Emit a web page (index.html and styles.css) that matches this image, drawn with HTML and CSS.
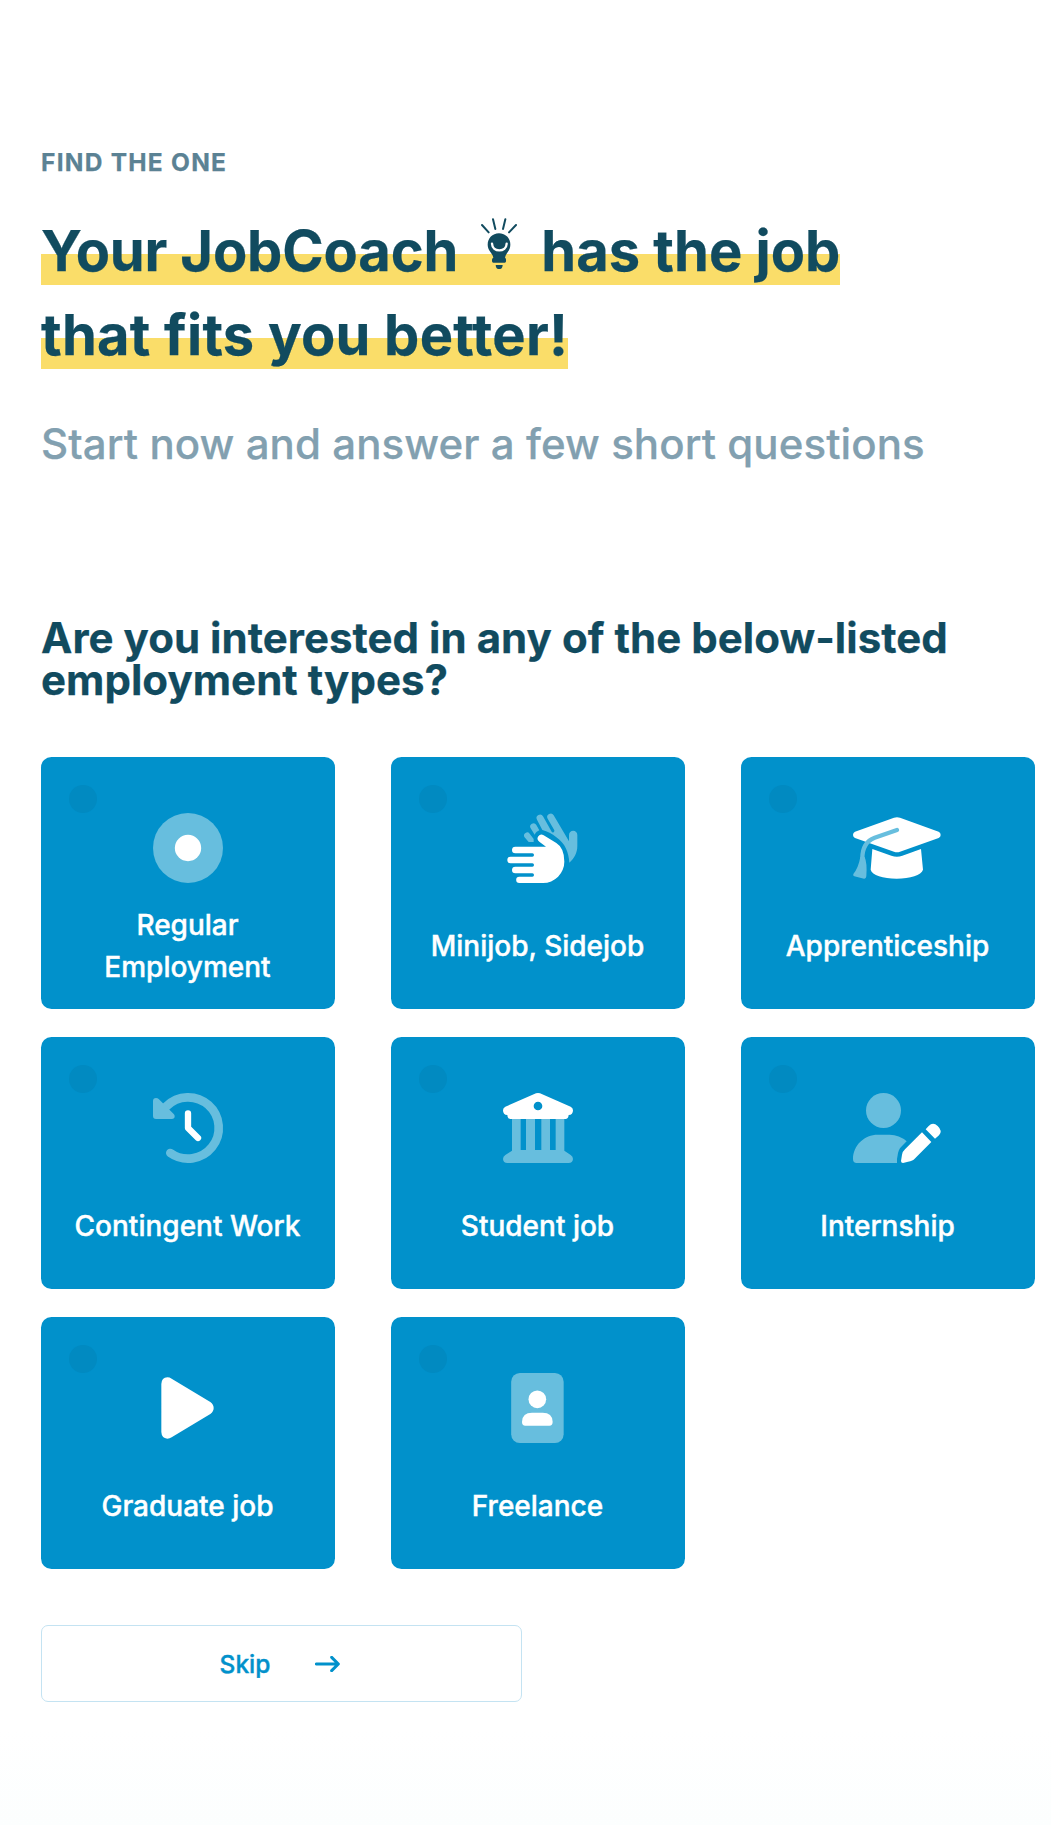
FILE: index.html
```html
<!DOCTYPE html>
<html lang="en">
<head>
<meta charset="utf-8">
<title>JobCoach</title>
<link rel="stylesheet" href="styles.css">
</head>
<body>
<main class="page">
  <header class="intro">
    <p class="eyebrow">Find the one</p>
    <h1 class="headline"><span class="mark"><span class="brand">Your JobCoach</span> <svg class="bulb" viewBox="0 0 110 153" aria-hidden="true"><path class="rays" d="M3 21 23 43M36 4 43 33M73 4 66 33M105 21 84 43"/><path d="M54 46C74 46 88 61 88 80C88 98 74 106 72 119Q75 121 75 125V130Q75 134 71 134H37Q33 134 33 130V125Q33 121 37 119C35 106 20 98 20 80C20 61 34 46 54 46Z"/><path d="M44 141H65Q64 153 57 153H52Q45 153 44 141Z"/><path class="smile" d="M33 77C34 104 76 104 77 77"/></svg> has the job<br><span class="second">that fits you better!</span></span></h1>
    <p class="lead">Start now and answer a few short questions</p>
  </header>

  <section class="step">
    <h2 class="question">Are you interested in any of the below-listed employment types?</h2>
    <div class="options">
      <button class="option">
        <span class="check"></span>
        <svg class="icon" viewBox="0 0 210 210"><circle class="soft" cx="105" cy="105" r="105"/><circle cx="105" cy="105" r="39.5"/></svg>
        <span class="label">Regular Employment</span>
      </button>
      <button class="option">
        <span class="check"></span>
        <svg class="icon" viewBox="0 0 210 210"><path class="soft" d="M118 51 102 20A10 10 0 0 1 120 10L146 56A4.500 4.500 0 0 0 154 52L134 17A10 10 0 0 1 152 7L198 85V66A12.500 12.500 0 0 1 223 66V98C223 120 214 135 199 149C197 118 187 92 160 73C147 62 133 55 118 51ZM95 65 83 46A9.500 9.500 0 0 1 100 36L109 52C104 54 98 58 95 65ZM77 87 64 72A9.500 9.500 0 0 1 80 62L92 78V87Z"/><path d="M37 101H129L109 86A11 11 0 0 1 122 67L160 90Q184 105 184 146A64 64 0 0 1 120 210H49A9.500 9.500 0 0 1 49 191H88A5 5 0 0 0 88 181H37A10 10 0 0 1 37 161H88A5 5 0 0 0 88 151H23A10 10 0 0 1 23 131H88A5 5 0 0 0 88 121H37A10 10 0 0 1 37 101Z"/></svg>
        <span class="label">Minijob, Sidejob</span>
      </button>
      <button class="option">
        <span class="check"></span>
        <svg class="icon" viewBox="0 0 210 210"><path d="M123 14Q132 11 141 14L257 56Q263 59 263 66Q263 72 257 75L141 116Q132 119 123 116L6 75Q0 72 0 66Q0 59 6 56ZM58 108 115 128Q132 134 148 128L204 108 210 170C205 186 172 197 131 197C90 197 57 186 53 170Z"/><path class="tassel" d="M132 51 65 74Q28 88 28 136"/><path class="soft" d="M22 132H35Q43 150 40 190Q39 198 33 197L4 190Q-1 188 1 183Q16 165 22 132Z"/></svg>
        <span class="label">Apprenticeship</span>
      </button>
      <button class="option">
        <span class="check"></span>
        <svg class="icon" viewBox="0 0 210 210"><path class="ring" d="M52 180A92 92 0 1 0 40 40"/><path class="soft" d="M0 24Q0 15 9 15Q14 15 17 18L62 63Q65 66 65 70Q65 78 56 78H9Q0 78 0 69Z"/><path class="hands" d="M105 61V105L135 135"/></svg>
        <span class="label">Contingent Work</span>
      </button>
      <button class="option">
        <span class="check"></span>
        <svg class="icon" viewBox="0 0 210 210"><path class="soft" d="M27 76H53V171H69V76H96V171H115V76H141V171H158V76H184V173L203 186Q210 191 210 198Q209 210 197 210H13Q1 210 0 198Q0 191 7 186L27 173Z"/><path fill-rule="evenodd" d="M99 1Q105-1 111 1L203 41Q210 45 210 52Q210 66 197 66Q196 78 187 78H22Q14 78 13 66Q0 66 0 52Q0 45 7 41ZM105 26A13 13 0 1 0 105 52A13 13 0 1 0 105 26Z"/></svg>
        <span class="label">Student job</span>
      </button>
      <button class="option">
        <span class="check"></span>
        <svg class="icon" viewBox="0 0 210 210"><circle class="soft" cx="91.500" cy="52.500" r="52.500"/><path class="soft" d="M11 210Q0 210 0 198C0 156 35 125 74 125H110Q139 125 161 145L145 161Q136 169 134 187Q131 198 132 210Z"/><path d="M207 118 235 147 185 197Q180 203 165 206L150 210Q144 210 144 204L147 185Q149 175 156 169ZM218 109 227 99Q240 86 254 99Q270 114 258 127L246 137Z"/></svg>
        <span class="label">Internship</span>
      </button>
      <button class="option">
        <span class="check"></span>
        <svg class="icon" viewBox="0 0 210 210"><path d="M25 33Q26 14 43 13Q50 13 56 17L172 87Q182 94 182 105Q182 116 172 123L56 193Q50 197 43 197Q26 196 25 177Z"/></svg>
        <span class="label">Graduate job</span>
      </button>
      <button class="option">
        <span class="check"></span>
        <svg class="icon" viewBox="0 0 210 210"><rect class="soft" x="24.500" width="157.500" height="210" rx="26"/><circle cx="103" cy="79" r="26.500"/><path d="M57 146Q58 119 87 119H119Q148 119 149 146Q149 158 139 158H67Q57 158 57 146Z"/></svg>
        <span class="label">Freelance</span>
      </button>
    </div>
    <button class="skip"><span>Skip</span><svg class="arrow" viewBox="0 0 75 48" aria-hidden="true"><path d="M4 24H69M50 4 70 24 50 44"/></svg></button>
  </section>
</main>
</body>
</html>
```
FILE: styles.css
```css
* { box-sizing: border-box; }

body {
  margin: 0;
  background: #fff;
  color: #114b5f;
  font-family: Inter, "Liberation Sans", sans-serif;
  -webkit-text-stroke: 0.25px currentColor;
}

svg { -webkit-text-stroke: 0; }

.page {
  min-height: 1825px;
  padding: 141px 16px 0 41px;
  background: linear-gradient(#fff 1730px, #fcfefe 1825px);
}

h1, h2, p { margin: 0; }

.eyebrow {
  color: #5b8294;
  font-size: 24.5px;
  font-weight: 700;
  line-height: 42px;
  letter-spacing: 1.25px;
  text-transform: uppercase;
}

.headline {
  margin-top: 26px;
  font-size: 56px;
  font-weight: 700;
  line-height: 84px;
}

.mark {
  background: linear-gradient(transparent 55%, #fadd69 55%);
  -webkit-box-decoration-break: clone;
  box-decoration-break: clone;
}

.brand { letter-spacing: -0.15px; }
.second { letter-spacing: 0.25px; }

.bulb {
  width: 36.7px;
  height: 51px;
  margin: 0 10px 0 10px;
  vertical-align: 2.2px;
  fill: #114b5f;
}
.rays { fill: none; stroke: #114b5f; stroke-width: 6; stroke-linecap: round; }
.smile { fill: none; stroke: #fff; stroke-width: 7; stroke-linecap: round; }

.lead {
  margin-top: 35px;
  color: #82a0b0;
  font-size: 42px;
  font-weight: 500;
  line-height: 63px;
  letter-spacing: 0.08px;
}

.question {
  margin-top: 142px;
  font-size: 42px;
  font-weight: 700;
  line-height: 42px;
  letter-spacing: 0.04px;
}

.options {
  display: grid;
  grid-template-columns: repeat(3, 294px);
  gap: 28px 56px;
  margin-top: 56px;
}

.option {
  position: relative;
  display: flex;
  flex-direction: column;
  align-items: center;
  gap: 21px;
  height: 252px;
  padding: 56px 28px 21px;
  border: 0;
  border-radius: 10.5px;
  background: #0191cb;
  color: #fff;
  font: 500 28px/42px Inter, "Liberation Sans", sans-serif;
  -webkit-text-stroke: 0.4px currentColor;
}

.check {
  position: absolute;
  top: 28px;
  left: 28px;
  width: 28px;
  height: 28px;
  border-radius: 50%;
  background: #018ac1;
}

.icon {
  flex: none;
  width: 70px;
  height: 70px;
  overflow: visible;
  fill: #fff;
}
.soft { fill: #67bede; }
.tassel { fill: none; stroke: #67bede; stroke-width: 13; stroke-linecap: round; }
.ring { fill: none; stroke: #67bede; stroke-width: 26; stroke-linecap: round; }
.hands { fill: none; stroke: #fff; stroke-width: 19; stroke-linecap: round; stroke-linejoin: round; }

.label {
  display: flex;
  align-items: center;
  height: 84px;
  margin-right: 1px;
}

.skip {
  display: flex;
  align-items: center;
  justify-content: center;
  gap: 45px;
  width: 481px;
  height: 77px;
  margin-top: 56px;
  padding: 0 3px 0 0;
  border: 1px solid #c4e3f2;
  border-radius: 7px;
  background: transparent;
  color: #0191cb;
  font: 500 24.5px/35px Inter, "Liberation Sans", sans-serif;
  -webkit-text-stroke: 0.4px currentColor;
}
.skip span { padding-top: 1px; }
.arrow { width: 25px; height: 16px; fill: none; stroke: #0191cb; stroke-width: 9; stroke-linecap: round; stroke-linejoin: round; }
```
